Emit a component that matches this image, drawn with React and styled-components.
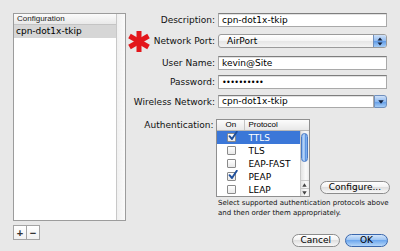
import React from 'react';
import styled, { createGlobalStyle } from 'styled-components';

const Global = createGlobalStyle`
  html, body {
    margin: 0;
    padding: 0;
    background: #e8e8e8;
  }
  body {
    font-family: "DejaVu Sans", "Liberation Sans", sans-serif;
    font-size: 9px;
    color: #000;
  }
`;

const Window = styled.div`
  width: 400px;
  height: 251px;
  box-sizing: border-box;
  padding: 13px 0 0 13px;
  display: flex;
  overflow: hidden;
  background: #e8e8e8;
`;

const Sidebar = styled.div`
  width: 113px;
  display: flex;
  flex-direction: column;
`;

const ListBox = styled.div`
  height: 208px;
  box-sizing: border-box;
  border: 1px solid #9c9c9c;
  background: #fff;
  display: flex;
`;

const ListMain = styled.div`
  flex: 1;
  display: flex;
  flex-direction: column;
`;

const ListHeader = styled.div`
  height: 10px;
  line-height: 10px;
  padding-left: 3px;
  font-family: "Liberation Sans", sans-serif;
  font-size: 8px;
  color: #222;
  background: linear-gradient(#fbfbfb, #e9e9e9);
  border-bottom: 1px solid #c4c4c4;
`;

const ListRow = styled.div`
  height: 13px;
  line-height: 13px;
  padding-left: 2px;
  font-size: 9px;
  background: ${p => (p.$selected ? '#d6d6d6' : 'transparent')};
`;

const ListTrack = styled.div`
  width: 8px;
  border-left: 1px solid #c8c8c8;
  background: linear-gradient(90deg, #f0f0f0, #fafafa);
`;

const ButtonBar = styled.div`
  display: flex;
  margin-top: 4px;
`;

const SquareButton = styled.div`
  width: 14px;
  height: 15px;
  box-sizing: border-box;
  border: 1px solid #a4a4a4;
  margin-right: -1px;
  background: linear-gradient(#ffffff, #f1f1f1);
  display: flex;
  align-items: center;
  justify-content: center;
  font-family: "Liberation Sans", sans-serif;
  font-size: 11px;
  font-weight: bold;
  color: #333;
`;

const Main = styled.div`
  margin-left: 1px;
  width: 263px;
  display: flex;
  flex-direction: column;
`;

const Row = styled.div`
  display: flex;
  align-items: center;
  height: ${p => p.$h || 14}px;
  margin-top: ${p => p.$mt || 0}px;
`;

const Label = styled.div`
  width: 88px;
  margin-right: 3px;
  display: flex;
  align-items: center;
  justify-content: flex-end;
  white-space: nowrap;
  color: #111;
`;

const Asterisk = styled.svg`
  width: 22px;
  height: 23px;
  margin-right: 4px;
  flex-shrink: 0;
`;

const TextField = styled.div`
  width: 169px;
  height: 14px;
  box-sizing: border-box;
  border: 1px solid #a9a9a9;
  border-top-color: #7e7e7e;
  background: #fff;
  box-shadow: inset 0 1px 0 #e2e2e2;
  padding-left: 3px;
  line-height: 12px;
  white-space: nowrap;
  overflow: hidden;
`;

const Dots = styled.span`
  font-size: 8px;
  letter-spacing: -0.6px;
`;

const Popup = styled.div`
  width: 169px;
  height: 14px;
  box-sizing: border-box;
  border: 1px solid #9a9a9a;
  border-radius: 3px;
  background: linear-gradient(#ffffff, #f4f4f4 50%, #e6e6e6 51%, #f3f3f3);
  display: flex;
  overflow: hidden;
`;

const PopupText = styled.div`
  flex: 1;
  padding-left: 8px;
  line-height: 12px;
`;

const BlueKnob = styled.div`
  width: 12px;
  background: linear-gradient(#cfe1f8, #8fbaf0 50%, #5f9ae6 51%, #a6cdf6);
  border-left: 1px solid #6f8fbd;
  display: flex;
  align-items: center;
  justify-content: center;
`;

const Combo = styled.div`
  width: 169px;
  height: 13px;
  display: flex;
`;

const ComboField = styled(TextField)`
  flex: 1;
  width: auto;
  height: 13px;
  line-height: 11px;
`;

const ComboButton = styled(BlueKnob)`
  border: 1px solid #6f8fbd;
  border-radius: 0 3px 3px 0;
  width: 11px;
`;

const AuthRow = styled.div`
  display: flex;
  align-items: flex-start;
  margin-top: 11px;
`;

const AuthLabel = styled(Label)`
  height: 12px;
`;

const Table = styled.div`
  width: 95px;
  height: 78px;
  box-sizing: border-box;
  border: 1px solid #8f8f8f;
  background: #fff;
  display: flex;
  flex-direction: column;
  overflow: hidden;
`;

const TableHeader = styled.div`
  height: 10px;
  display: grid;
  grid-template-columns: 28px 1fr;
  font-family: "Liberation Sans", sans-serif;
  font-size: 8px;
  line-height: 10px;
  background: linear-gradient(#fcfcfc, #e8e8e8);
  border-bottom: 1px solid #b8b8b8;
  flex-shrink: 0;
`;

const HeadCell = styled.div`
  padding-left: ${p => (p.$center ? 0 : 3)}px;
  text-align: ${p => (p.$center ? 'center' : 'left')};
  border-right: ${p => (p.$center ? '1px solid #c4c4c4' : 'none')};
`;

const TableBody = styled.div`
  flex: 1;
  display: flex;
  min-height: 0;
`;

const Rows = styled.div`
  flex: 1;
  overflow: hidden;
`;

const ProtoRow = styled.div`
  height: 13px;
  display: grid;
  grid-template-columns: 28px 1fr;
  align-items: center;
  background: ${p => (p.$selected ? '#3b77d8' : '#fff')};
  color: ${p => (p.$selected ? '#fff' : '#000')};
`;

const CheckCell = styled.div`
  display: flex;
  justify-content: center;
`;

const Box = styled.div`
  width: 9px;
  height: 9px;
  box-sizing: border-box;
  border: 1px solid #8a8a8a;
  border-radius: 1px;
  background: linear-gradient(#ffffff, #e9e9e9);
  position: relative;
  overflow: visible;
`;

const ProtoName = styled.div`
  padding-left: 3px;
  white-space: nowrap;
`;

const ScrollBar = styled.div`
  width: 9px;
  border-left: 1px solid #c9c9c9;
  background: linear-gradient(90deg, #e4e4e4, #fafafa 60%, #ececec);
  display: flex;
  flex-direction: column;
  align-items: center;
  padding-top: 2px;
  box-sizing: border-box;
`;

const Thumb = styled.div`
  width: 7px;
  height: 29px;
  border-radius: 4px;
  box-sizing: border-box;
  border: 1px solid #4a7ac4;
  background: linear-gradient(90deg, #7fb0ee, #c4dcf8 40%, #5d96e4 70%, #8dbbf1);
`;

const Arrows = styled.div`
  margin-top: auto;
  width: 100%;
  display: flex;
  flex-direction: column;
`;

const ArrowBox = styled.div`
  height: 7px;
  border-top: 1px solid #c9c9c9;
  display: flex;
  align-items: center;
  justify-content: center;
`;

const AquaButton = styled.div`
  height: 13px;
  box-sizing: border-box;
  padding: 0 ${p => p.$pad || 8}px;
  min-width: ${p => p.$w || 0}px;
  border-radius: 7px;
  border: 1px solid ${p => (p.$primary ? '#3a67ad' : '#8c8c8c')};
  background: ${p =>
    p.$primary
      ? 'linear-gradient(#d3e5fa, #9cc4f3 45%, #6ea8ee 50%, #b5d6f8)'
      : 'linear-gradient(#ffffff, #f2f2f2 45%, #e0e0e0 50%, #f8f8f8)'};
  display: flex;
  align-items: center;
  justify-content: center;
  font-size: 9px;
  line-height: 11px;
  white-space: nowrap;
`;

const ConfigureWrap = styled.div`
  margin-left: 10px;
  margin-top: 62px;
`;

const Help = styled.div`
  margin-left: 91px;
  margin-top: 1px;
  font-size: 7px;
  line-height: 10px;
  color: #111;
  white-space: nowrap;
`;

const Footer = styled.div`
  display: flex;
  justify-content: flex-end;
  gap: 5px;
  margin-top: 16px;
  padding-right: 2px;
`;

const protocols = [
  { name: 'TTLS', on: true, selected: true },
  { name: 'TLS', on: false },
  { name: 'EAP-FAST', on: false },
  { name: 'PEAP', on: true },
  { name: 'LEAP', on: false },
];

const Check = () => (
  <svg width="10" height="10" viewBox="0 0 10 10" style={{ position: 'absolute', left: 0, top: -3 }}>
    <path d="M1.5 5.2 L4 8 L8.8 0.8" fill="none" stroke="#1f4f9c" strokeWidth="1.9" strokeLinecap="round" strokeLinejoin="round" />
  </svg>
);

const UpDown = () => (
  <svg width="6" height="9" viewBox="0 0 6 9">
    <path d="M3 0.5 L5.5 3.5 L0.5 3.5 Z" fill="#13213d" />
    <path d="M3 8.5 L5.5 5.5 L0.5 5.5 Z" fill="#13213d" />
  </svg>
);

const Down = () => (
  <svg width="6" height="4" viewBox="0 0 6 4">
    <path d="M0.3 0.3 L5.7 0.3 L3 3.7 Z" fill="#13213d" />
  </svg>
);

const Tri = ({ up }) => (
  <svg width="5" height="4" viewBox="0 0 5 4">
    <path d={up ? 'M2.5 0.3 L4.7 3.7 L0.3 3.7 Z' : 'M0.3 0.3 L4.7 0.3 L2.5 3.7 Z'} fill="#444" />
  </svg>
);

export default function App() {
  return (
    <>
      <Global />
      <Window>
        <Sidebar>
          <ListBox>
            <ListMain>
              <ListHeader>Configuration</ListHeader>
              <ListRow $selected>cpn-dot1x-tkip</ListRow>
            </ListMain>
            <ListTrack />
          </ListBox>
          <ButtonBar>
            <SquareButton>+</SquareButton>
            <SquareButton>−</SquareButton>
          </ButtonBar>
        </Sidebar>

        <Main>
          <Row>
            <Label>Description:</Label>
            <TextField>cpn-dot1x-tkip</TextField>
          </Row>
          <Row $mt={7}>
            <Label>
              <Asterisk viewBox="0 0 22 23">
                <g stroke="#e3161b" strokeWidth="5" strokeLinecap="butt">
                  <line x1="11" y1="1" x2="11" y2="22" />
                  <line x1="1.5" y1="6" x2="20.5" y2="17" />
                  <line x1="1.5" y1="17" x2="20.5" y2="6" />
                </g>
              </Asterisk>
              Network Port:
            </Label>
            <Popup>
              <PopupText>AirPort</PopupText>
              <BlueKnob>
                <UpDown />
              </BlueKnob>
            </Popup>
          </Row>
          <Row $mt={8}>
            <Label>User Name:</Label>
            <TextField>kevin@Site</TextField>
          </Row>
          <Row $mt={5}>
            <Label>Password:</Label>
            <TextField>
              <Dots>••••••••••</Dots>
            </TextField>
          </Row>
          <Row $mt={6} $h={13}>
            <Label>Wireless Network:</Label>
            <Combo>
              <ComboField>cpn-dot1x-tkip</ComboField>
              <ComboButton>
                <Down />
              </ComboButton>
            </Combo>
          </Row>

          <AuthRow>
            <AuthLabel>Authentication:</AuthLabel>
            <Table>
              <TableHeader>
                <HeadCell $center>On</HeadCell>
                <HeadCell>Protocol</HeadCell>
              </TableHeader>
              <TableBody>
                <Rows>
                  {protocols.map(p => (
                    <ProtoRow key={p.name} $selected={p.selected}>
                      <CheckCell>
                        <Box>{p.on && <Check />}</Box>
                      </CheckCell>
                      <ProtoName>{p.name}</ProtoName>
                    </ProtoRow>
                  ))}
                </Rows>
                <ScrollBar>
                  <Thumb />
                  <Arrows>
                    <ArrowBox>
                      <Tri up />
                    </ArrowBox>
                    <ArrowBox>
                      <Tri />
                    </ArrowBox>
                  </Arrows>
                </ScrollBar>
              </TableBody>
            </Table>
            <ConfigureWrap>
              <AquaButton $w={67}>Configure...</AquaButton>
            </ConfigureWrap>
          </AuthRow>

          <Help>
            Select supported authentication protocols above
            <br />
            and then order them appropriately.
          </Help>

          <Footer>
            <AquaButton $w={47}>Cancel</AquaButton>
            <AquaButton $w={43} $primary>OK</AquaButton>
          </Footer>
        </Main>
      </Window>
    </>
  );
}
